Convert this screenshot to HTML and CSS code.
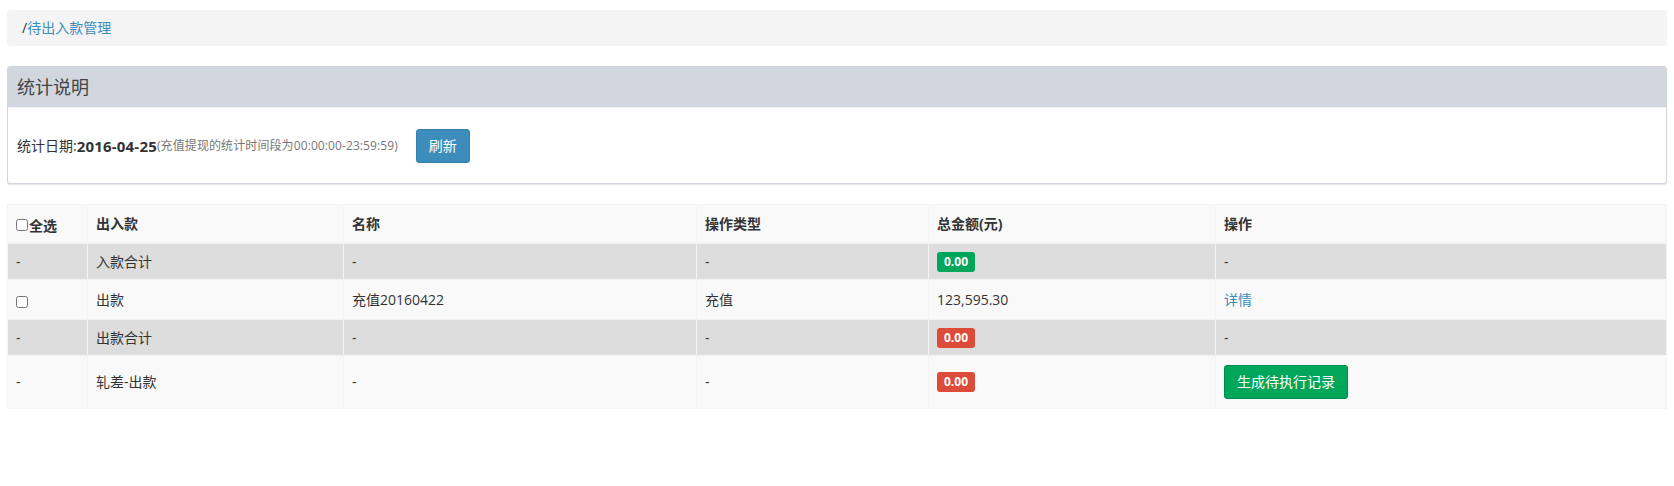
FILE: index.html
```html
<!DOCTYPE html>
<html lang="zh-CN">
<head>
<meta charset="utf-8">
<title>待出入款管理</title>
<link rel="stylesheet" href="styles.css">
</head>
<body>
<div class="page">
  <ol class="breadcrumb">
    <li><span class="sep">/</span><a href="#">待出入款管理</a></li>
  </ol>

  <div class="box">
    <div class="box-header">
      <h3 class="box-title">统计说明</h3>
    </div>
    <div class="box-body">
      <span class="stat-label">统计日期:</span><b class="stat-date">2016-04-25</b><span class="stat-note">(充值提现的统计时间段为00:00:00-23:59:59)</span>
      <button class="btn btn-primary" type="button">刷新</button>
    </div>
  </div>

  <table class="table">
    <colgroup>
      <col class="c1"><col class="c2"><col class="c3"><col class="c4"><col class="c5"><col class="c6">
    </colgroup>
    <thead>
      <tr>
        <th><label class="check-all"><input type="checkbox" class="cb">全选</label></th>
        <th>出入款</th>
        <th>名称</th>
        <th>操作类型</th>
        <th>总金额(元)</th>
        <th>操作</th>
      </tr>
    </thead>
    <tbody>
      <tr class="sum">
        <td>-</td>
        <td>入款合计</td>
        <td>-</td>
        <td>-</td>
        <td><span class="label label-success">0.00</span></td>
        <td>-</td>
      </tr>
      <tr class="check-row">
        <td><input type="checkbox" class="cb"></td>
        <td>出款</td>
        <td>充值20160422</td>
        <td>充值</td>
        <td>123,595.30</td>
        <td><a href="#">详情</a></td>
      </tr>
      <tr class="sum">
        <td>-</td>
        <td>出款合计</td>
        <td>-</td>
        <td>-</td>
        <td><span class="label label-danger">0.00</span></td>
        <td>-</td>
      </tr>
      <tr class="btn-row">
        <td>-</td>
        <td>轧差-出款</td>
        <td>-</td>
        <td>-</td>
        <td><span class="label label-danger">0.00</span></td>
        <td><button class="btn btn-success" type="button">生成待执行记录</button></td>
      </tr>
    </tbody>
  </table>
</div>
</body>
</html>
```

FILE: styles.css
```css
* { box-sizing: border-box; }

html, body {
  margin: 0;
  padding: 0;
  background: #fff;
}

body {
  font-family: "Open Sans", "Noto Sans CJK SC", sans-serif;
  font-size: 14px;
  line-height: 20px;
  color: #333;
}

a { color: #3c8dbc; text-decoration: none; }

.page {
  padding: 10px 7px 0 7px;
}

/* breadcrumb */
.breadcrumb {
  list-style: none;
  margin: 0 0 20px 0;
  padding: 8px 15px;
  background: #f4f4f4;
  border-radius: 4px;
  height: 36px;
}
.breadcrumb .sep { color: #333; }

/* box */
.box {
  border: 1px solid #d2d6de;
  border-radius: 3px;
  box-shadow: 0 1px 1px rgba(0, 0, 0, 0.1);
  background: #fff;
  margin-bottom: 20px;
}
.box-header {
  background: #d2d6de;
  padding: 10px 9px;
  border-bottom: 1px solid #f4f4f4;
  height: 41px;
}
.box-title {
  margin: 0;
  font-size: 18px;
  font-weight: normal;
  line-height: 20px;
  color: #444;
}
.box-body {
  display: flex;
  align-items: center;
  padding: 20px 9px 20px 9px;
  height: 75px;
}
.stat-label { font-size: 14px; color: #333; }
.stat-date { font-size: 15px; font-weight: bold; color: #333; letter-spacing: 0.2px; }
.stat-note { font-size: 12px; color: #777; letter-spacing: 0.1px; }

.btn {
  display: inline-block;
  height: 34px;
  padding: 6px 12px;
  font-family: inherit;
  font-size: 14px;
  line-height: 20px;
  border: 1px solid transparent;
  border-radius: 3px;
  color: #fff;
  cursor: pointer;
  vertical-align: top;
}
.box-body .btn { margin-left: 18px; }
.btn-primary { background: #3c8dbc; border-color: #367fa9; }
.btn-success { background: #00a65a; border-color: #008d4c; }

/* table */
.table {
  width: 100%;
  border-collapse: collapse;
  table-layout: fixed;
  border: 1px solid #f4f4f4;
}
.c1 { width: 80px; }
.c2 { width: 256px; }
.c3 { width: 353px; }
.c4 { width: 232px; }
.c5 { width: 287px; }

.table th, .table td {
  border: 1px solid #f4f4f4;
  padding: 8px;
  text-align: left;
  vertical-align: top;
  line-height: 20px;
}
.table th {
  font-weight: bold;
  background: #f9f9f9;
  padding-top: 9px;
  padding-bottom: 7px;
  border-bottom-width: 2px;
}
.table tbody tr { background: #f9f9f9; }
.table tbody tr.sum { background: #dddddd; }
.table tbody tr.sum td { padding-top: 8px; padding-bottom: 7px; }
.table tbody tr.check-row td { padding-top: 10px; padding-bottom: 9px; }
.table tbody tr.btn-row td { padding-top: 9px; padding-bottom: 9px; }
.table tbody tr.btn-row td:not(:last-child) { padding-top: 16px; }

.check-all {
  display: inline-flex;
  align-items: center;
  position: relative;
  top: 2px;
}
.cb {
  width: 12px;
  height: 12px;
  margin: 0;
}
.check-all .cb { margin-right: 1px; position: relative; top: -1px; }
.check-row .cb { vertical-align: top; margin-top: 6px; }

.label {
  display: inline-block;
  padding: 3px 7px;
  font-size: 12px;
  font-weight: bold;
  line-height: 14px;
  color: #fff;
  border-radius: 3px;
  vertical-align: top;
}
.label-success { background: #00a65a; }
.label-danger { background: #dd4b39; }
```
